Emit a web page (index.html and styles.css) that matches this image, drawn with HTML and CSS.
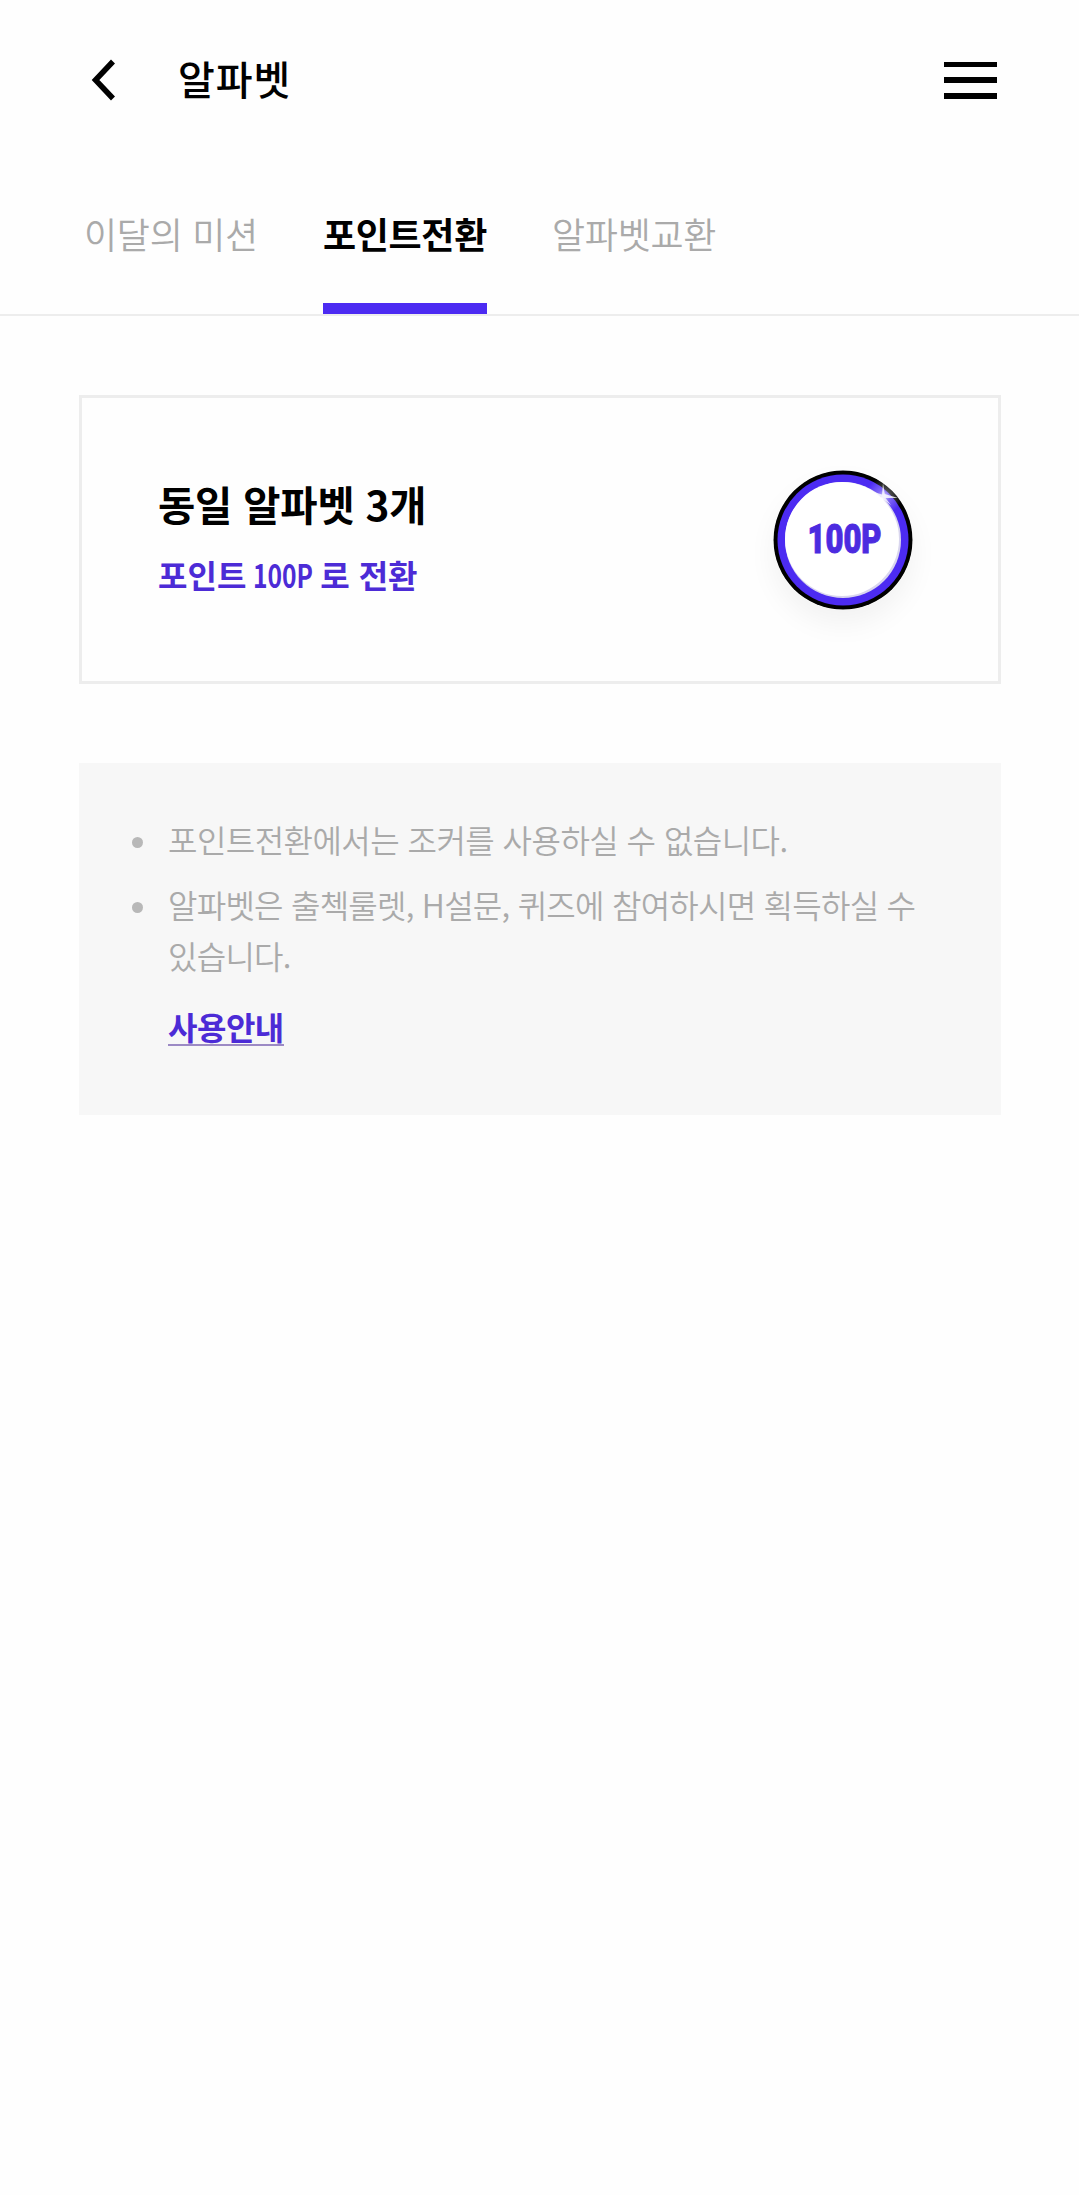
FILE: index.html
```html
<!DOCTYPE html>
<html lang="ko">
<head>
    <meta charset="UTF-8">
    <title>알파벳</title>
    <link rel="stylesheet" href="styles.css">
</head>
<body>
    <header class="header">
        <a class="back-btn" href="#" aria-label="뒤로">
            <svg width="26" height="42" viewBox="0 0 26 42">
                <path d="M22 2.500 L4.500 21 L22 39.500" fill="none" stroke="#000" stroke-width="5.500"/>
            </svg>
        </a>
        <h1 class="title">알파벳</h1>
        <button class="menu-btn" aria-label="메뉴">
            <span></span>
            <span></span>
            <span></span>
        </button>
    </header>

    <nav class="tabs">
        <a class="tab" href="#">이달의 미션</a>
        <a class="tab active" href="#">포인트전환</a>
        <a class="tab" href="#">알파벳교환</a>
    </nav>

    <main class="container">
        <div class="card">
            <div class="card-text">
                <h2>동일 알파벳 3개</h2>
                <p>포인트 <span class="point">100P</span> 로 전환</p>
            </div>
            <svg class="coin" width="140" height="140" viewBox="0 0 140 140">
                <defs>
                    <radialGradient id="glow">
                        <stop offset="0" stop-color="#fff" stop-opacity="0.75"/>
                        <stop offset="0.35" stop-color="#fff" stop-opacity="0.3"/>
                        <stop offset="1" stop-color="#fff" stop-opacity="0"/>
                    </radialGradient>
                </defs>
                <circle cx="70" cy="70" r="69.5" fill="#000"/>
                <circle cx="70" cy="70" r="65.5" fill="#4c2bf2"/>
                <circle cx="70" cy="70" r="58" fill="#d9d6ee"/>
                <circle cx="69" cy="69" r="57" fill="#fff"/>
                <text x="34.5" y="83" textLength="74" lengthAdjust="spacingAndGlyphs">100P</text>
                <circle cx="111" cy="26" r="18" fill="url(#glow)"/>
                <path d="M110 13 L111.800 24 L125 28 L112.500 28 L118 35 L110.500 29.500 L106 33 L108.500 27 L101 22 L109 24.500 Z" fill="#fff" opacity="0.8"/>
            </svg>
        </div>

        <div class="notice">
            <ul>
                <li>포인트전환에서는 조커를 사용하실 수 없습니다.</li>
                <li>알파벳은 출첵룰렛, H설문, 퀴즈에 참여하시면 획득하실 수 있습니다.</li>
            </ul>
            <a class="guide" href="#">사용안내</a>
        </div>
    </main>
</body>
</html>
```

FILE: styles.css
```css
* {
    box-sizing: border-box;
    margin: 0;
    padding: 0;
}
body {
    background: #fefefe;
    color: #000;
    font-family: "Noto Sans CJK KR", "Noto Sans", sans-serif;
}
a {
    color: inherit;
    text-decoration: none;
}

/* header */
.header {
    display: flex;
    align-items: center;
    height: 160px;
    padding: 0 82px 0 91px;
}
.back-btn {
    display: flex;
    width: 87px;
}
.title {
    flex: 1;
    padding-bottom: 4px;
    font-size: 40px;
    font-weight: 500;
    line-height: 60px;
    letter-spacing: 0.9px;
}
.menu-btn {
    display: flex;
    flex-direction: column;
    justify-content: space-between;
    width: 53px;
    height: 37px;
    border: none;
    background: none;
}
.menu-btn span {
    height: 5.5px;
    background: #000;
}

/* tabs */
.tabs {
    display: flex;
    gap: 65px;
    height: 156px;
    padding-left: 84px;
    border-bottom: 2px solid #ededed;
}
.tab {
    height: 154px;
    padding-top: 47px;
    color: #aaa;
    font-size: 36px;
    font-weight: 350;
    line-height: 52px;
    letter-spacing: -0.3px;
}
.tab.active {
    border-bottom: 11px solid #4c2bf2;
    color: #000;
    font-weight: 700;
}

.container {
    padding: 79px 78px 0 79px;
}

/* card */
.card {
    display: flex;
    align-items: center;
    justify-content: space-between;
    height: 289px;
    padding: 0 85px 0 76px;
    border: 3px solid #ededed;
}
.card-text {
    padding-bottom: 6px;
}
.card h2 {
    font-size: 40.5px;
    font-weight: 700;
    line-height: 60px;
    letter-spacing: -0.2px;
}
.card p {
    margin-top: 14px;
    color: #4c2bd6;
    font-size: 32px;
    font-weight: 700;
    line-height: 52px;
}
.point {
    display: inline-block;
    width: 58px;
    margin-left: -2px;
    transform: scaleX(0.77);
    transform-origin: left;
}
.coin {
    border-radius: 50%;
    box-shadow: 0 14px 28px rgba(0, 0, 0, 0.05);
}
.coin text {
    fill: #4c2be0;
    stroke: #4c2be0;
    stroke-width: 1px;
    font-family: Roboto, sans-serif;
    font-size: 40px;
    font-weight: 900;
}

/* notice */
.notice {
    height: 352px;
    margin-top: 79px;
    padding: 51px 53px 0 89px;
    background: #f7f7f7;
    color: #aaa;
    font-size: 32px;
    font-weight: 350;
    line-height: 51px;
}
.notice ul {
    list-style: none;
}
.notice li {
    position: relative;
    margin-bottom: 14px;
    letter-spacing: -0.55px;
}
.notice li:last-child {
    letter-spacing: -0.75px;
}
.notice li::before {
    content: "";
    position: absolute;
    left: -36px;
    top: 23px;
    width: 11px;
    height: 11px;
    border-radius: 50%;
    background: #b8b8b8;
}
.guide {
    display: inline-block;
    height: 42px;
    margin-top: 9px;
    border-bottom: 2px solid #9c8ac4;
    color: #4c2bd6;
    font-weight: 700;
    line-height: 44px;
    letter-spacing: -0.5px;
}
```
